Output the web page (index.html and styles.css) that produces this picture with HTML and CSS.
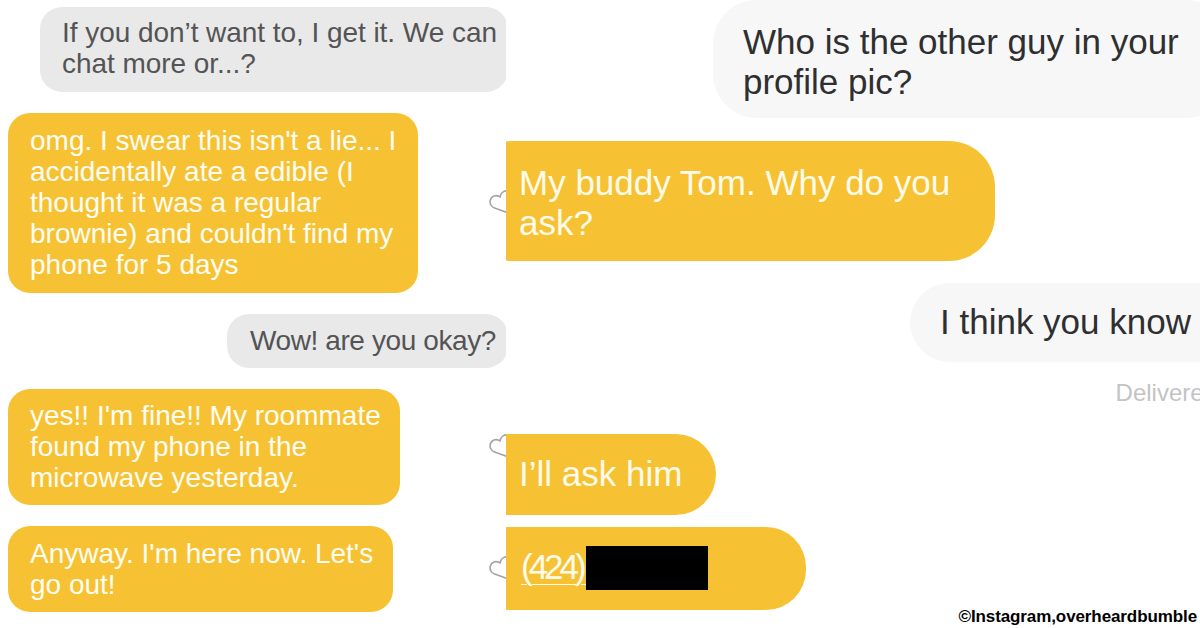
FILE: index.html
```html
<!DOCTYPE html>
<html lang="en">
<head>
    <meta charset="UTF-8">
    <title>Overheard Bumble</title>
    <link rel="stylesheet" href="styles.css">
</head>
<body>
    <div class="screen">
        <!-- Left screenshot -->
        <section class="panel panel-left">
            <div class="row row-out">
                <div class="bubble gray b-first">If you don’t want to, I get it. We can<br>chat more or...?</div>
            </div>
            <div class="row row-in">
                <div class="bubble yellow b-edible">omg. I swear this isn't a lie... I<br>accidentally ate a edible (I<br>thought it was a regular<br>brownie) and couldn't find my<br>phone for 5 days</div>
                <svg class="heart" viewBox="0 0 24 24"><path d="M12 20.5 4.2 12.8C2 10.6 2 7.2 4.2 5.2 6.2 3.3 9.4 3.5 11.2 5.6L12 6.5l.8-.9c1.8-2.1 5-2.3 7-.4 2.2 2 2.2 5.4 0 7.6Z"/></svg>
            </div>
            <div class="row row-out">
                <div class="bubble gray b-wow">Wow! are you okay?</div>
            </div>
            <div class="row row-in">
                <div class="bubble yellow b-fine">yes!! I'm fine!! My roommate<br>found my phone in the<br>microwave yesterday.</div>
                <svg class="heart" viewBox="0 0 24 24"><path d="M12 20.5 4.2 12.8C2 10.6 2 7.2 4.2 5.2 6.2 3.3 9.4 3.5 11.2 5.6L12 6.5l.8-.9c1.8-2.1 5-2.3 7-.4 2.2 2 2.2 5.4 0 7.6Z"/></svg>
            </div>
            <div class="row row-in">
                <div class="bubble yellow b-anyway">Anyway. I'm here now. Let's<br>go out!</div>
                <svg class="heart" viewBox="0 0 24 24"><path d="M12 20.5 4.2 12.8C2 10.6 2 7.2 4.2 5.2 6.2 3.3 9.4 3.5 11.2 5.6L12 6.5l.8-.9c1.8-2.1 5-2.3 7-.4 2.2 2 2.2 5.4 0 7.6Z"/></svg>
            </div>
        </section>

        <!-- Right screenshot -->
        <section class="panel panel-right">
            <div class="pill light q-guy">Who is the other guy in your<br>profile pic?</div>
            <div class="pill amber a-tom">My buddy Tom. Why do you<br>ask?</div>
            <div class="pill light q-know">I think you know</div>
            <div class="delivered">Delivered</div>
            <div class="pill amber a-ask">I’ll ask him</div>
            <div class="pill amber a-number"><span class="phone">(424)</span><span class="phone-gap"> </span><span class="redacted"></span></div>
        </section>

        <div class="credit">©Instagram,overheardbumble</div>
    </div>
</body>
</html>
```

FILE: styles.css
```css
body {
    margin: 0;
    padding: 0;
    background-color: white;
    font-family: "Liberation Sans", Arial, sans-serif;
}
.screen {
    position: relative;
    display: flex;
    width: 1200px;
    height: 628px;
    overflow: hidden;
}
.panel {
    display: flex;
    flex-direction: column;
    height: 100%;
    overflow: hidden;
    box-sizing: border-box;
}

/* Left screenshot */
.panel-left {
    width: 506px;
    padding-top: 7px;
    gap: 21px;
    font-size: 28px;
    line-height: 31px;
}
.row {
    display: flex;
    align-items: center;
}
.row-out {
    justify-content: flex-end;
}
.row-in {
    justify-content: space-between;
    padding-left: 8px;
}
.bubble {
    box-sizing: border-box;
    border-radius: 22px;
    white-space: nowrap;
}
.gray {
    background-color: #e9e9e9;
    color: #545456;
    margin-right: -2px;
}
.yellow {
    background-color: #f6c234;
    color: #fffdf3;
}
.b-first {
    width: 468px;
    padding: 10px 0 13px 22px;
    letter-spacing: -0.05px;
}
.b-edible {
    width: 410px;
    padding: 12px 0 13px 22px;
}
.b-wow {
    width: 281px;
    padding: 11px 0 12px 23px;
    letter-spacing: -0.4px;
}
.b-fine {
    width: 392px;
    padding: 11px 0 12px 22px;
}
.b-anyway {
    width: 385px;
    padding: 12px 0 12px 22px;
}
.heart {
    flex: none;
    width: 30px;
    height: 30px;
    margin-right: -12px;
    fill: none;
    stroke: #a4a4a8;
    stroke-width: 1.3;
    transform: rotate(-25deg);
}

/* Right screenshot */
.panel-right {
    width: 694px;
    font-size: 35px;
    line-height: 40px;
}
.pill {
    box-sizing: border-box;
    white-space: nowrap;
}
.light {
    align-self: flex-end;
    background-color: #f7f7f7;
    color: #2f2f31;
    border-radius: 44px;
}
.amber {
    align-self: flex-start;
    background-color: #f6c234;
    color: #fffbea;
    margin-left: -40px;
    border-radius: 46px;
}
.q-guy {
    width: 517px;
    margin-right: -30px;
    padding: 22px 0 16px 30px;
}
.a-tom {
    width: 529px;
    margin-top: 23px;
    padding: 22px 0 18px 53px;
}
.q-know {
    width: 330px;
    margin-top: 22px;
    margin-right: -40px;
    padding: 19px 0 20px 30px;
}
.delivered {
    align-self: flex-end;
    margin-top: 17px;
    margin-right: -17px;
    font-size: 24px;
    line-height: 28px;
    color: #c3c3c5;
}
.a-ask {
    width: 250px;
    margin-top: 27px;
    padding: 20px 0 21px 53px;
    border-radius: 41px;
}
.a-number {
    width: 340px;
    margin-top: 12px;
    padding: 20px 0 20px 55px;
    border-radius: 40px;
}
.phone,
.phone-gap {
    text-decoration: underline;
    text-decoration-thickness: 1px;
    text-underline-offset: 5px;
}
.phone {
    letter-spacing: -4px;
}
.phone-gap {
    letter-spacing: -6px;
}
.redacted {
    display: inline-block;
    width: 122px;
    height: 44px;
    background-color: black;
    vertical-align: middle;
    margin-top: -4px;
}

/* Watermark over the picture */
.credit {
    position: absolute;
    right: 3px;
    bottom: 1px;
    font-size: 17px;
    font-weight: bold;
    line-height: 20px;
    color: black;
    letter-spacing: -0.1px;
}
```
